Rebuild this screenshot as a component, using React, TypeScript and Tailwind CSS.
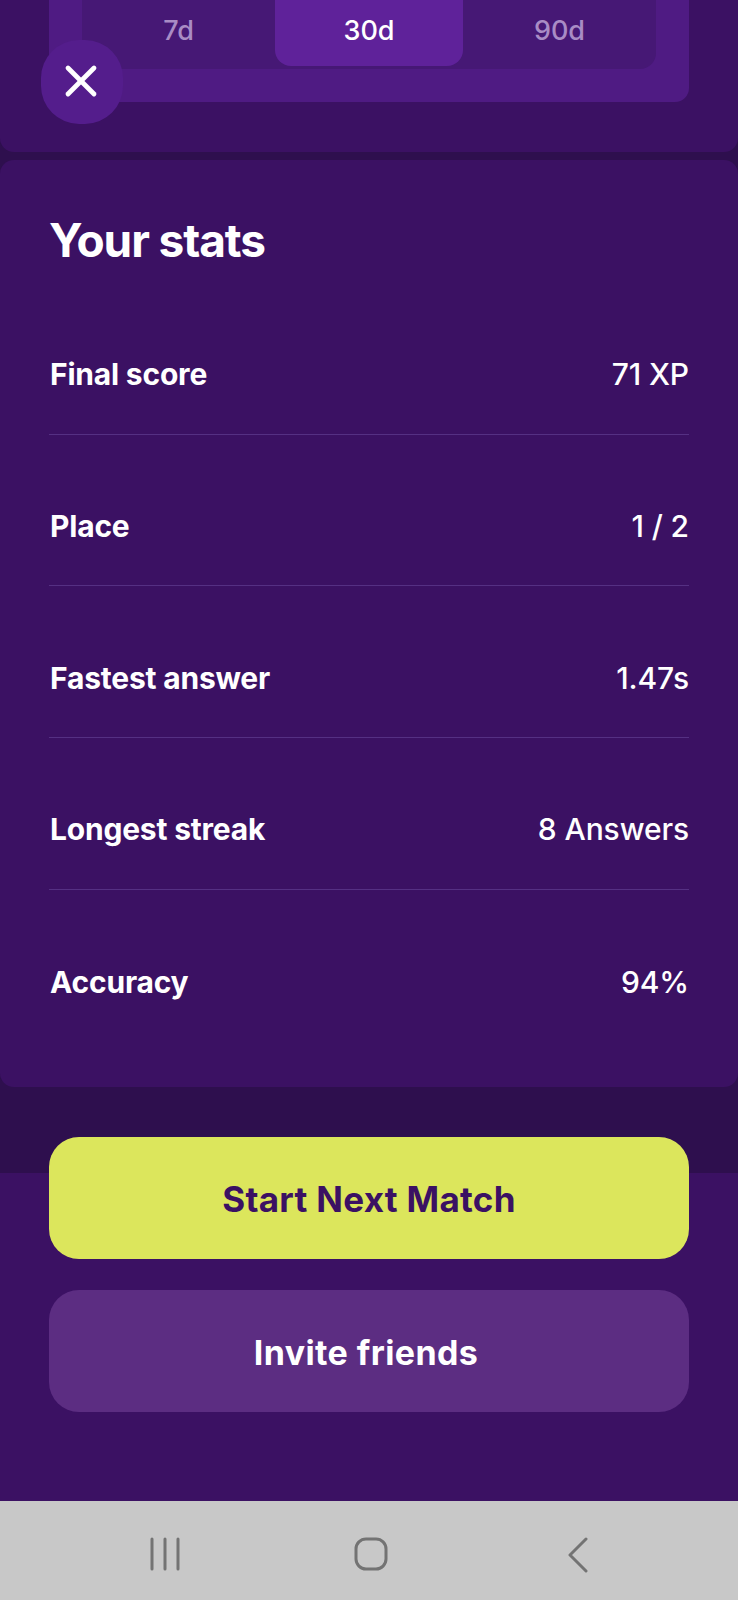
import { X } from "lucide-react";

const stats = [
  { label: "Final score", value: "71 XP" },
  { label: "Place", value: "1 / 2" },
  { label: "Fastest answer", value: "1.47s" },
  { label: "Longest streak", value: "8 Answers" },
  { label: "Accuracy", value: "94%" },
];

function RangeTabs() {
  return (
    <div className="flex h-[152px] flex-col justify-end overflow-hidden rounded-b-[14px] bg-[#3b1163] px-[49px] pb-[50px]">
      <div className="shrink-0 rounded-b-[14px] bg-[#4f1b83] px-[33px] pb-[33px]">
        <div className="flex h-[100px] items-end rounded-b-[16px] bg-[#461875] pb-[3px] text-[27px] font-medium">
          {["7d", "30d", "90d"].map((range) => (
            <div
              key={range}
              className={
                range === "30d"
                  ? "flex h-full w-[188px] items-end justify-center rounded-b-[16px] bg-[#5f229a] pb-[15px] text-white"
                  : "flex h-full flex-1 items-end justify-center pb-[15px] text-[#a98cc5]"
              }
            >
              {range}
            </div>
          ))}
        </div>
      </div>
    </div>
  );
}

function StatsCard() {
  return (
    <div className="mt-2 h-[927px] rounded-[14px] bg-[#3b1163] px-[49px] pt-[52px] text-white">
      <h1 className="text-[46px] leading-[56px] font-bold tracking-[-1.1px]">Your stats</h1>
      <div className="mt-[15px]">
        {stats.map((row, i) => (
          <div
            key={row.label}
            className={
              i < stats.length - 1
                ? "flex h-[151.7px] items-center justify-between border-b border-[#553083] pt-[33px]"
                : "flex h-[151.7px] items-center justify-between pt-[33px]"
            }
          >
            <span className="pl-px text-[30px] font-bold tracking-[-0.2px]">{row.label}</span>
            <span className="text-[30px] font-medium tracking-[-0.1px]">{row.value}</span>
          </div>
        ))}
      </div>
    </div>
  );
}

function NavBar() {
  return (
    <div className="flex h-[99px] items-start bg-[#c8c8c8] pt-[36px] pl-[149px]">
      <svg width="32" height="34" viewBox="0 0 32 34" fill="none" stroke="#737373" strokeWidth="3" strokeLinecap="round">
        <path d="M3 2v30M16 2v30M29 2v30" />
      </svg>
      <svg className="ml-[173px]" width="34" height="34" viewBox="0 0 34 34" fill="none" stroke="#737373" strokeWidth="3">
        <rect x="2" y="2" width="30" height="30" rx="10" />
      </svg>
      <svg className="ml-[179px]" width="22" height="36" viewBox="0 0 22 36" fill="none" stroke="#737373" strokeWidth="3" strokeLinecap="round" strokeLinejoin="round">
        <path d="M19 2 3 18l16 16" />
      </svg>
    </div>
  );
}

export default function App() {
  return (
    <div className="flex h-[1600px] w-[738px] flex-col overflow-hidden bg-[#3b1163] font-['Inter',sans-serif]">
      <div className="relative h-[1173px] shrink-0 bg-[#2e0f4e]">
        <RangeTabs />
        <StatsCard />
        <button className="absolute top-[40px] left-[41px] flex h-[84px] w-[82px] items-center justify-center rounded-[38px] bg-[#541d8c] pr-[2px] pb-[2px] text-white">
          <X size={52} strokeWidth={2.2} />
        </button>
      </div>
      <div className="relative z-10 mt-[-36px] flex flex-1 flex-col gap-[31px] px-[49px]">
        <button className="h-[122px] rounded-[30px] bg-[#dce65c] pt-[2px] text-[35px] font-bold tracking-[0.3px] text-[#3b1163]">
          Start Next Match
        </button>
        <button className="h-[122px] rounded-[30px] bg-[#5c2d82] pt-[2px] pr-[6px] text-[34px] font-bold tracking-[0.4px] text-white">
          Invite friends
        </button>
      </div>
      <NavBar />
    </div>
  );
}
